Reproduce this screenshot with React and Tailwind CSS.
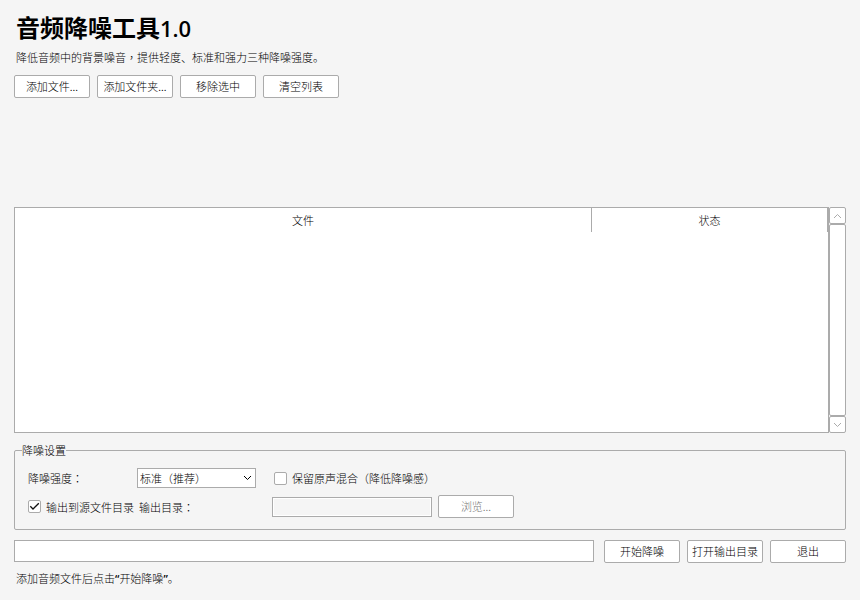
import { useState } from "react";

const Mark = ({ children }) => (
  <span className="font-['Noto_Sans_CJK_TC',sans-serif]">{children}</span>
);

const Button = ({ children, ...props }) => (
  <button
    type="button"
    className="flex h-[23px] w-[76px] shrink-0 items-center justify-center whitespace-nowrap rounded-xs border border-[#ababab] bg-white pb-0.5 text-black enabled:hover:bg-gray-100 disabled:text-[#777]"
    {...props}
  >
    {children}
  </button>
);

const Chevron = ({ up, className }) => (
  <svg
    viewBox="0 0 9 6"
    fill="none"
    stroke="currentColor"
    className={`h-[6px] w-[9px] ${up ? "rotate-180" : ""} ${className || ""}`}
  >
    <path d="M1 1 L4.5 4.5 L8 1" />
  </svg>
);

const Checkbox = ({ label, checked, onChange }) => (
  <label className="flex items-center gap-[5px]">
    <span className="relative size-[13px]">
      <input
        type="checkbox"
        checked={checked}
        onChange={(e) => onChange(e.target.checked)}
        className="peer block size-[13px] appearance-none rounded-xs border border-[#ababab] bg-white"
      />
      <svg
        viewBox="0 0 13 13"
        fill="none"
        stroke="#111"
        strokeWidth="1.3"
        className="pointer-events-none invisible absolute inset-0 size-[13px] peer-checked:visible"
      >
        <path d="M2.3 6.3 L5 9 L10.8 3.2" />
      </svg>
    </span>
    <span>{label}</span>
  </label>
);

const App = () => {
  const [strength, setStrength] = useState("normal");
  const [keepOriginal, setKeepOriginal] = useState(false);
  const [sameFolder, setSameFolder] = useState(true);
  const [outputDir, setOutputDir] = useState("");

  return (
    <main className="flex min-h-screen flex-col bg-[#f5f5f5] px-3.5 pt-3 pb-[13px] font-['Noto_Sans_CJK_SC',sans-serif] text-[11px] leading-4 font-light text-black">
      <header className="px-0.5">
        <h1 className="text-2xl leading-[30px] font-bold">
          音频降噪工具
          <span className="font-['Open_Sans','Noto_Sans',sans-serif] text-[22px] font-semibold">
            1.0
          </span>
        </h1>
        <p className="mt-1.5">
          降低音频中的背景噪音<Mark>，</Mark>提供轻度、标准和强力三种降噪强度。
        </p>
      </header>

      <div className="mt-2.5 flex gap-[7px]">
        <Button>添加文件...</Button>
        <Button>添加文件夹...</Button>
        <Button>移除选中</Button>
        <Button>清空列表</Button>
      </div>

      <section className="mt-[109px] flex min-h-40 flex-1">
        <div className="flex-1 border border-[#ababab] bg-white">
          <table className="w-full table-fixed border-separate border-spacing-0">
            <thead>
              <tr className="h-6">
                <th className="w-[71%] border-r border-[#ababab] p-0 font-light">
                  文件
                </th>
                <th className="border-r border-[#ababab] p-0 font-light">
                  状态
                </th>
              </tr>
            </thead>
            <tbody />
          </table>
        </div>
        <div className="flex w-[17px] flex-col text-[#ababab]">
          <button
            type="button"
            aria-label="向上滚动"
            className="flex h-[17px] items-center justify-center rounded-xs border border-[#ababab] bg-white"
          >
            <Chevron up />
          </button>
          <div className="flex-1 rounded-xs border border-[#ababab] bg-white" />
          <button
            type="button"
            aria-label="向下滚动"
            className="flex h-[17px] items-center justify-center rounded-xs border border-[#ababab] bg-white"
          >
            <Chevron />
          </button>
        </div>
      </section>

      <fieldset className="mt-[9px] rounded-xs border border-[#ababab] px-[13px] pb-[11px]">
        <legend className="-ml-1.5">降噪设置</legend>
        <div className="mt-2.5 grid grid-cols-[109px_135px_1fr] items-center gap-y-[7px]">
          <label htmlFor="strength">
            降噪强度<Mark>：</Mark>
          </label>
          <div className="relative w-[119px]">
            <select
              id="strength"
              value={strength}
              onChange={(e) => setStrength(e.target.value)}
              className="block h-5 w-full appearance-none border border-[#ababab] bg-white px-0.5"
            >
              <option value="light">轻度</option>
              <option value="normal">标准（推荐）</option>
              <option value="strong">强力</option>
            </select>
            <Chevron className="pointer-events-none absolute top-[7px] right-1" />
          </div>
          <div className="pl-0.5">
            <Checkbox
              label="保留原声混合（降低降噪感）"
              checked={keepOriginal}
              onChange={setKeepOriginal}
            />
          </div>
          <div className="col-span-2 flex items-center gap-[5px]">
            <Checkbox
              label="输出到源文件目录"
              checked={sameFolder}
              onChange={setSameFolder}
            />
            <label htmlFor="output-dir">
              输出目录<Mark>：</Mark>
            </label>
          </div>
          <div className="flex items-center gap-1.5">
            <input
              id="output-dir"
              type="text"
              value={outputDir}
              onChange={(e) => setOutputDir(e.target.value)}
              disabled={sameFolder}
              className="h-5 w-40 border border-[#ababab] bg-white px-1 inset-ring inset-ring-white disabled:bg-[#f5f5f5]"
            />
            <Button disabled={sameFolder}>浏览...</Button>
          </div>
        </div>
      </fieldset>

      <div className="mt-2.5 flex gap-[7px]">
        <div
          role="progressbar"
          aria-label="降噪进度"
          aria-valuenow={0}
          className="mr-[3px] h-[22px] flex-1 border border-[#ababab] bg-white"
        />
        <Button>开始降噪</Button>
        <Button>打开输出目录</Button>
        <Button>退出</Button>
      </div>

      <p className="mt-[7px] px-0.5">
        添加音频文件后点击
        <span className="font-['Open_Sans','Noto_Sans',sans-serif] font-semibold">
          “
        </span>
        开始降噪
        <span className="font-['Open_Sans','Noto_Sans',sans-serif] font-semibold">
          ”
        </span>
        。
      </p>
    </main>
  );
};

export default App;
